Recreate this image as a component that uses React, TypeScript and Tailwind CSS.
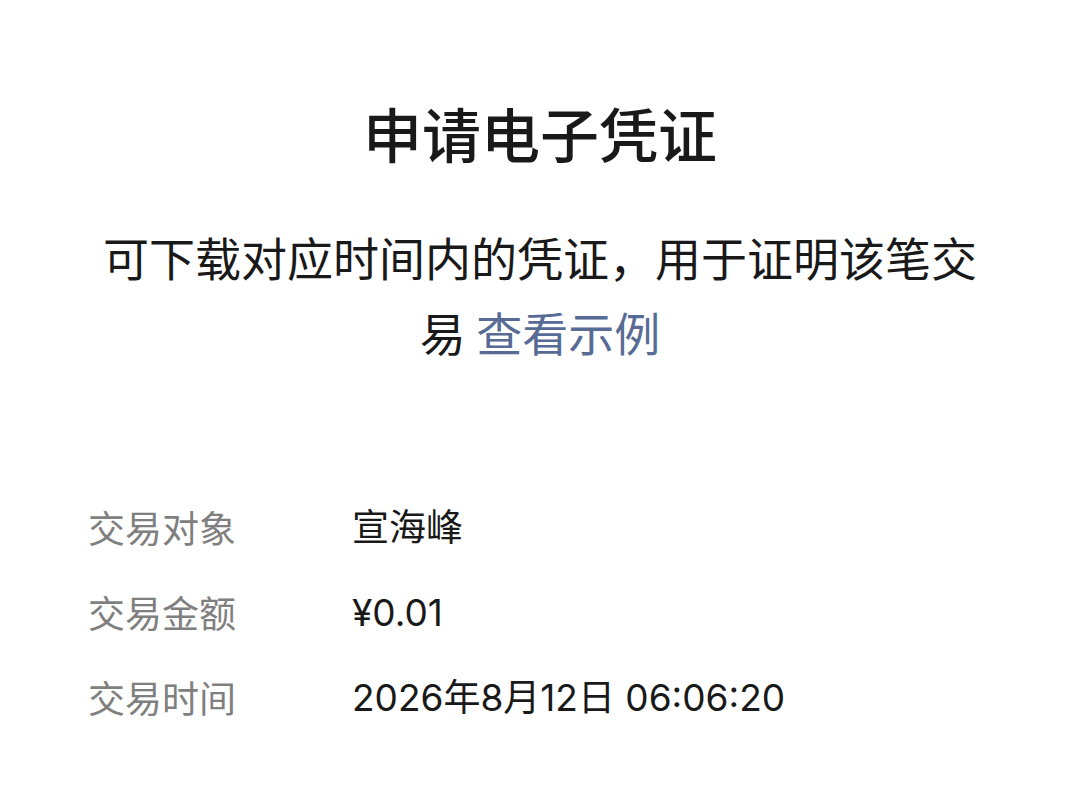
const rows = [
  { label: '交易对象', value: '宣海峰' },
  { label: '交易金额', value: '¥0.01' },
  { label: '交易时间', value: '2026年8月12日 06:06:20' },
];

export default function App() {
  return (
    <div
      className="min-h-[805px] w-[1080px] bg-white"
      style={{ fontFamily: '"Noto Sans CJK SC", "Noto Sans", sans-serif' }}
    >
      <div className="px-[100px] pt-[92px] text-center">
        <h1 className="text-[59px] font-medium leading-[81px] text-[#191919]">申请电子凭证</h1>
        <p className="mt-[46px] text-[46px] leading-[75px] text-[#191919]">
          可下载对应时间内的凭证，用于证明该笔交易 <span className="text-[#576b95]">查看示例</span>
        </p>
      </div>

      <div className="mt-[116px] px-[88px]">
        {rows.map((r) => (
          <div key={r.label} className="flex h-[85px] items-center text-[37px]">
            <div className="w-[264px] shrink-0 text-[#7f7f7f]">{r.label}</div>
            <div
              className="text-[#191919]"
              style={{ fontFamily: 'Inter, "Noto Sans CJK SC", sans-serif' }}
            >
              {r.value}
            </div>
          </div>
        ))}
      </div>
    </div>
  );
}
